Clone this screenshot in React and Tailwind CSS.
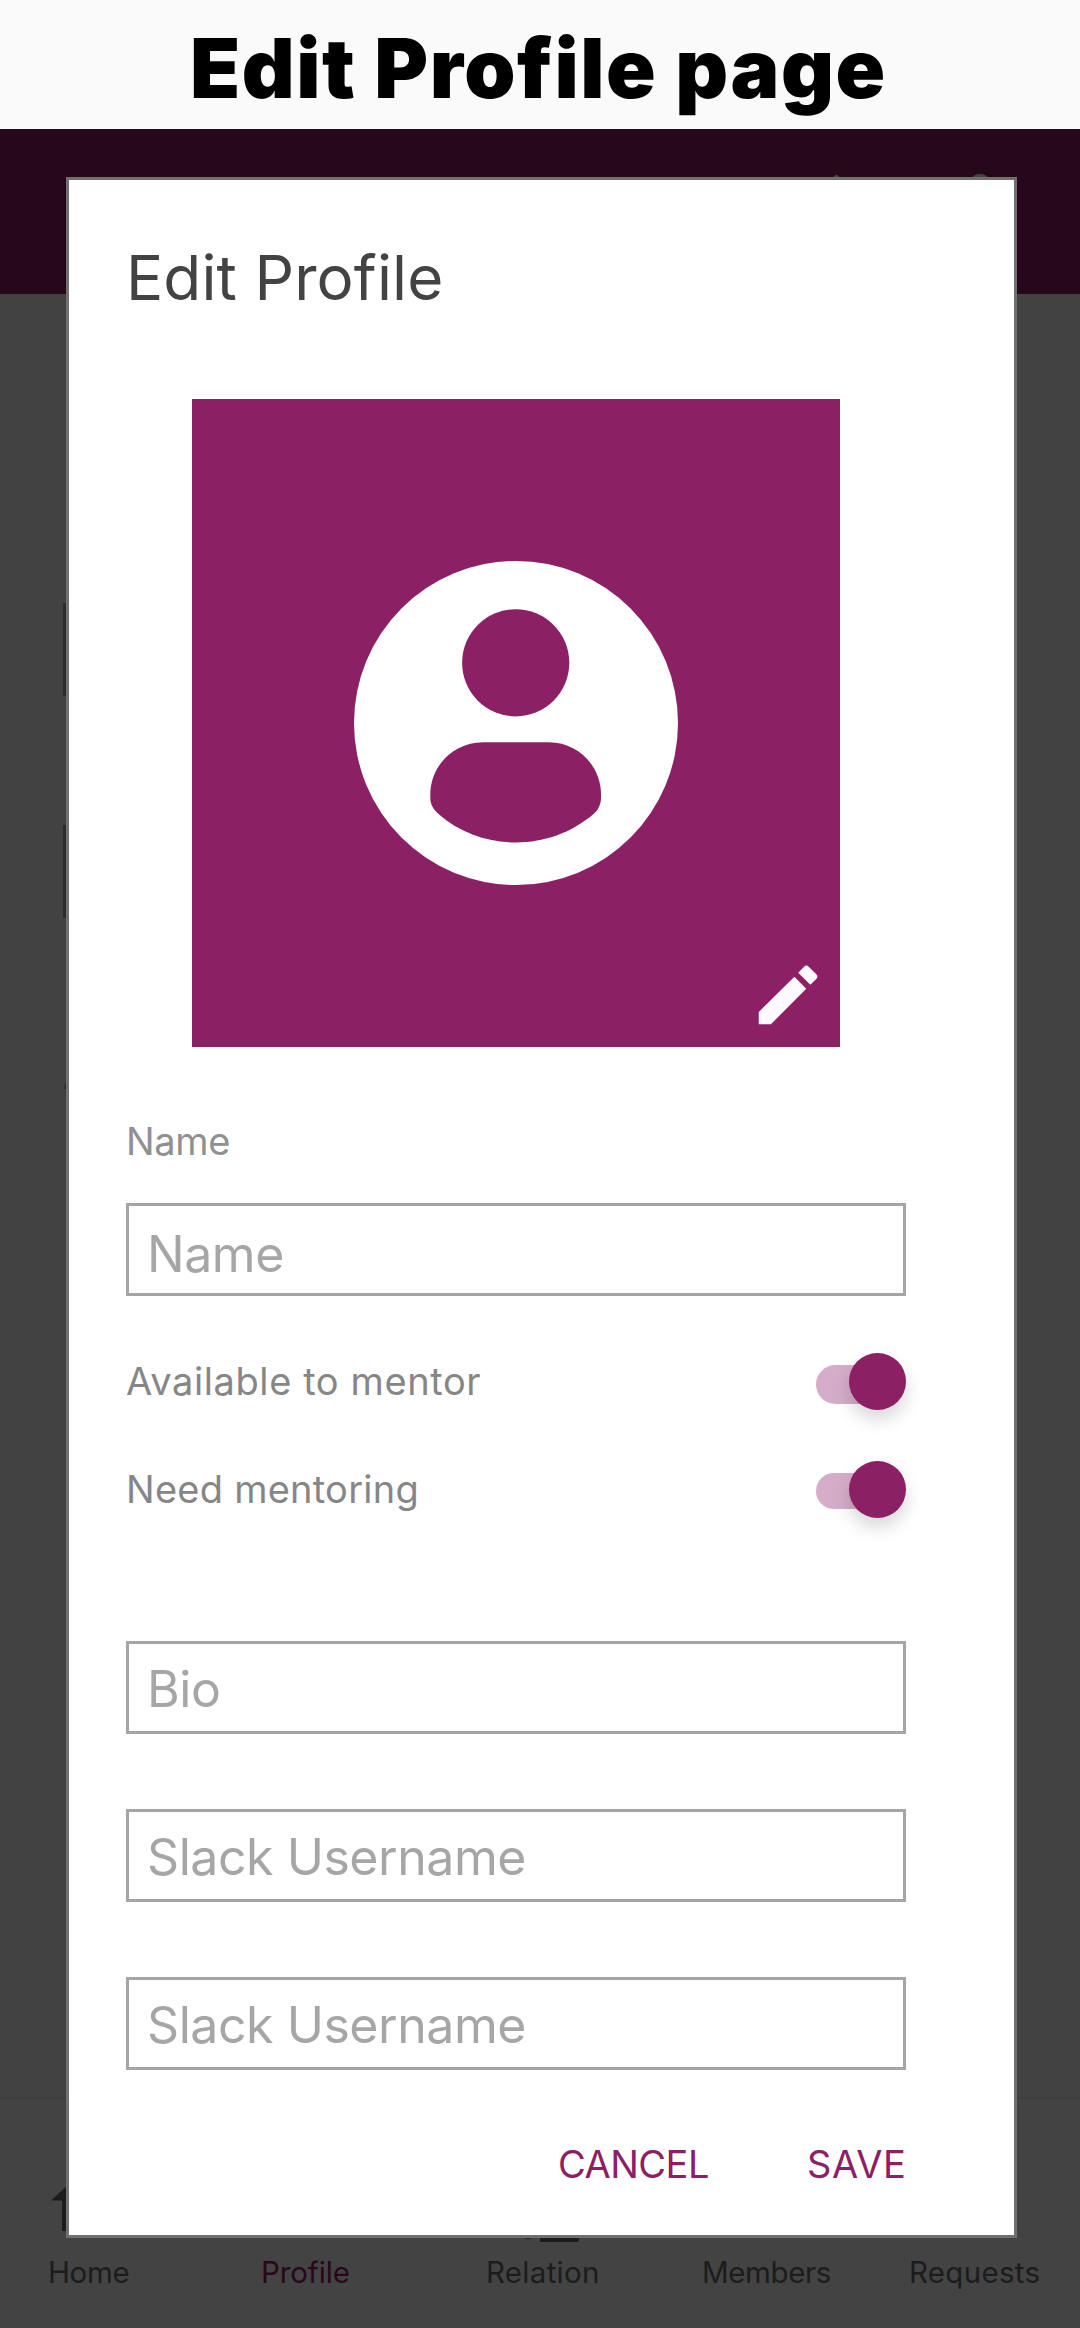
import React from "react";

// Single line of text that never wraps.
function Line({ className = "", children }) {
  return <span className={`block whitespace-nowrap ${className}`}>{children}</span>;
}

function Field({ label, pad = "" }) {
  return (
    <div className={`h-[93px] w-[780px] border-[3px] border-[#a5a5a5] pl-[18px] ${pad}`}>
      <Line className="text-[50px] leading-[60px] tracking-[-0.45px] text-[#a6a6a6]">{label}</Line>
    </div>
  );
}

function Toggle({ track }) {
  return (
    <div className="relative h-[57px] w-[90px]">
      <div className={`mt-[12px] w-[78px] rounded-full bg-[#d5adc8] ${track}`} />
      <div className="absolute right-0 top-0 size-[57px] rounded-full bg-[#8b2064] shadow-[0_9px_18px_rgba(0,0,0,0.16)]" />
    </div>
  );
}

function Avatar() {
  return (
    <div className="relative ml-[66px] flex size-[648px] items-center justify-center bg-[#8b2064]">
      <svg width="324" height="324" viewBox="0 0 324 324">
        <circle cx="162" cy="162" r="162" fill="#fff" />
        <circle cx="161.7" cy="101.8" r="53.6" fill="#8b2064" />
        <path
          fill="#8b2064"
          d="M129 181.3H195C223.500 181.300 247 204.500 247 233.500V237C247 243.500 244 249 239.500 253C217.500 271.800 190.500 281.400 161.700 281.400C133 281.400 106 271.800 84.500 253C79.500 248.500 76.300 243.500 76.300 237V233.500C76.300 204.500 100 181.300 129 181.300Z"
        />
      </svg>
      <svg className="absolute bottom-[13px] right-[13px]" width="78" height="78" viewBox="0 0 24 24" fill="#fffaff">
        <path d="M3 17.250V21h3.750L17.610 10.040l-3.650-3.650L3 17.250zM20.710 7.040a.996.996 0 0 0 0-1.410l-2.340-2.340a.996.996 0 0 0-1.410 0l-1.830 1.830 3.750 3.750 1.830-1.830z" />
      </svg>
    </div>
  );
}

export default function App() {
  return (
    <div className="relative flex h-[2328px] w-[1080px] flex-col overflow-hidden bg-[#424242] font-['Inter',sans-serif]">
      <header className="h-[129px] bg-[#fafafa] pl-[190px] pt-[20px]">
        <Line className="text-[82px] leading-[98px] font-black tracking-[1.55px] text-black">Edit Profile page</Line>
      </header>
      <div className="h-[165px] bg-[#27081b]" />
      <div className="flex-1" />
      <nav className="h-[229px] bg-[#434343] pt-[155px] text-[29.5px] leading-[36px] text-[#1c1c1c] shadow-[0_-1px_3px_rgba(0,0,0,0.08)]">
        <div className="flex">
          <Line className="ml-[48px] w-[213px] tracking-[-0.3px]">Home</Line>
          <Line className="w-[225px] text-[#27081b] tracking-[-0.1px]">Profile</Line>
          <Line className="w-[216px] tracking-[0.3px]">Relation</Line>
          <Line className="w-[207px] tracking-[-0.4px]">Members</Line>
          <Line className="tracking-[0.3px]">Requests</Line>
        </div>
      </nav>

      {/* Page content peeking out from behind the dialog */}
      <svg className="absolute left-0 top-0" width="1080" height="2328" viewBox="0 0 1080 2328">
        <path fill="#484145" d="M833 177L836.500 174.500L840 177ZM972 178Q974 174 980 174Q986 174 988 178Z" />
        <path fill="#2b2b2b" d="M63 603H67V696H63ZM63 825H67V918H63ZM64 1089L65.500 1082H67V1089Z" />
        <path fill="#1c1c1c" d="M51 2200.500L70 2183V2231H62V2200.500ZM540 2235H579V2240Q579 2242 577 2242H540ZM523 2236H533V2237Q528 2241 523 2237Z" />
      </svg>

      <main className="absolute left-[66px] top-[177px] flex h-[2061px] w-[951px] flex-col border-[3px] border-[#707070] bg-white pl-[57px]">
        <Line className="mt-[60px] text-[62px] leading-[76px] tracking-[0.1px] text-[#434343]">Edit Profile</Line>
        <div className="mt-[83px]">
          <Avatar />
        </div>
        <Line className="mt-[71px] text-[38px] leading-[46px] tracking-[-0.3px] text-[#909090]">Name</Line>
        <div className="mt-[39px]">
          <Field label="Name" pad="pt-[18px]" />
        </div>
        <div className="mt-[57px] flex w-[780px] justify-between">
          <Line className="mt-[5px] text-[38px] leading-[46px] tracking-[0.6px] text-[#868686]">Available to mentor</Line>
          <Toggle track="h-[39px]" />
        </div>
        <div className="mt-[51px] flex w-[780px] justify-between">
          <Line className="mt-[5px] text-[38px] leading-[46px] tracking-[0.25px] text-[#868686]">Need mentoring</Line>
          <Toggle track="h-[36px]" />
        </div>
        <div className="mt-[123px] flex flex-col gap-[75px]">
          <Field label="Bio" pad="pt-[15px]" />
          <Field label="Slack Username" pad="pt-[15px]" />
          <Field label="Slack Username" pad="pt-[15px]" />
        </div>
        <div className="mt-[71px] flex text-[38px] leading-[46px] text-[#8b2064]">
          <Line className="ml-[432px] w-[249px] tracking-[-0.5px]">CANCEL</Line>
          <Line className="tracking-[0.6px]">SAVE</Line>
        </div>
      </main>
    </div>
  );
}
